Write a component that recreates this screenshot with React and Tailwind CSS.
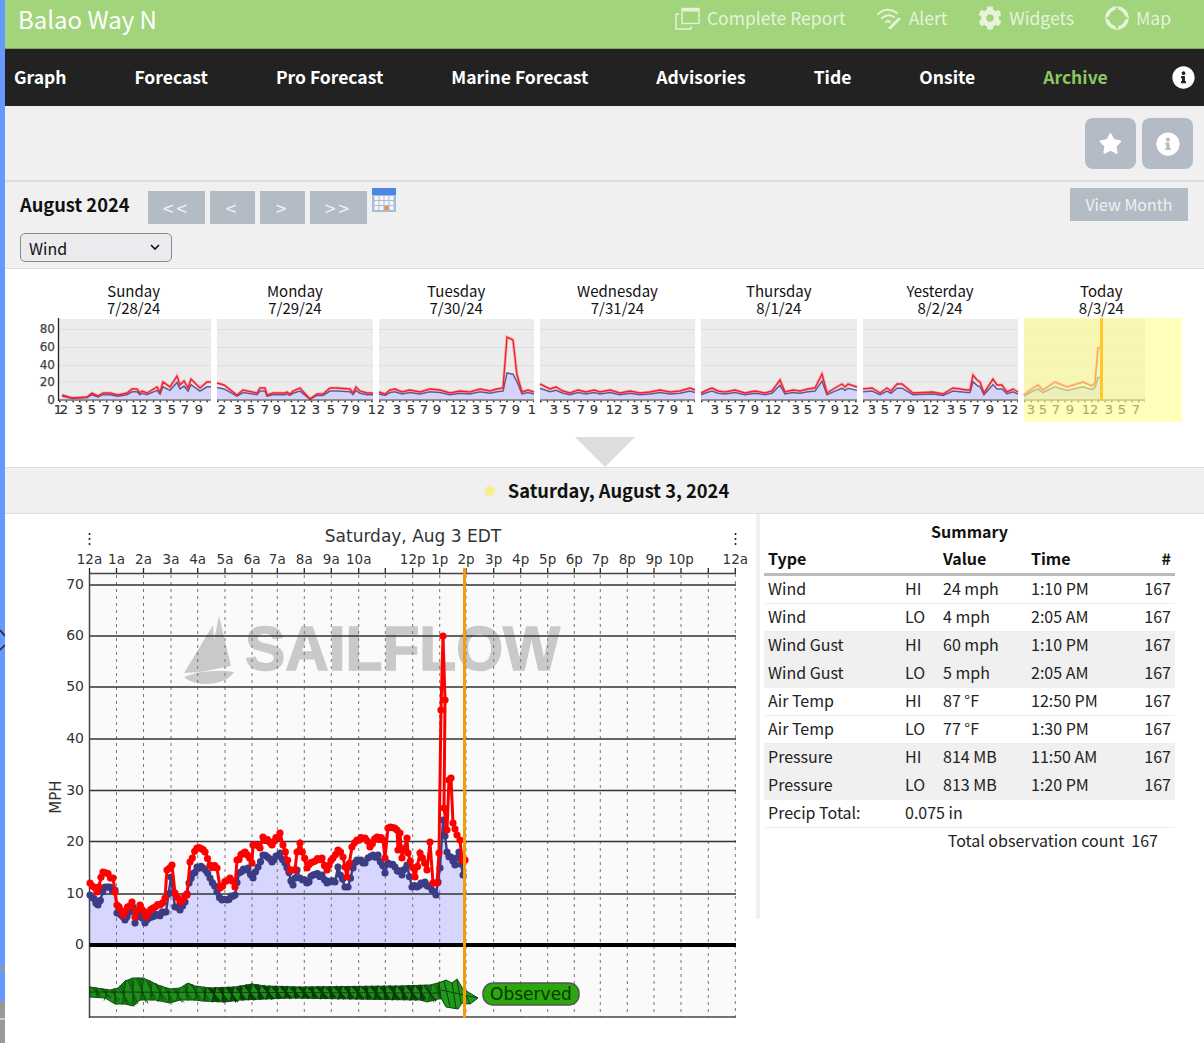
import { FaStar, FaInfoCircle, FaCog } from 'react-icons/fa'

const HOURS = ['12a','1a','2a','3a','4a','5a','6a','7a','8a','9a','10a','','12p','1p','2p','3p','4p','5p','6p','7p','8p','9p','10p','','12a']
const HOUR_X = [89.5,116.5,143.5,171,197.7,225,252,277.3,304.3,331.3,358.7,385.3,412.7,439.7,466,493.7,520.7,547.7,574.3,600.3,627.3,654,681,708.3,735.3]
const Y_TICKS = [[70,585],[60,636],[50,687],[40,739],[30,790.5],[20,841.5],[10,894]]

// traced off the graph, in page coordinates
const GUST = [[90,883],[97,892],[103,872],[113,878],[117,905],[123,915],[132,902],[135,917],[140,905],[146,917],[153,908],[160,905],[165,898],[167,870],[172,865],[175,893],[180,902],[187,895],[190,862],[197,848],[205,852],[210,865],[217,868],[220,888],[230,878],[235,887],[237,860],[245,852],[252,863],[253,845],[260,848],[263,837],[272,845],[280,833],[283,845],[290,870],[295,870],[297,852],[300,843],[307,868],[313,862],[322,858],[327,870],[333,858],[338,850],[343,857],[347,877],[352,847],[357,840],[365,838],[370,847],[377,837],[383,840],[385,858],[388,828],[397,830],[398,850],[400,833],[402,858],[407,838],[408,853],[415,877],[420,853],[427,870],[430,842],[433,883],[437,883],[439,853],[441,710],[443,636],[445,700],[444,808],[447,830],[449,780],[451,778],[453,823],[457,835],[460,840],[462,860],[465,860]]
const WIND = [[90,895],[98,905],[105,887],[115,890],[117,913],[125,920],[133,907],[135,923],[140,912],[145,923],[152,917],[158,915],[166,912],[171,877],[175,907],[180,910],[185,902],[189,883],[197,867],[203,868],[210,878],[217,892],[222,900],[227,900],[235,895],[239,873],[248,868],[253,878],[258,867],[263,855],[272,862],[280,853],[285,863],[293,885],[297,870],[300,878],[307,883],[313,875],[322,875],[327,883],[335,882],[338,867],[345,887],[348,887],[353,868],[357,860],[365,863],[368,858],[378,855],[385,873],[388,863],[395,867],[402,875],[407,865],[412,887],[417,887],[425,882],[432,890],[436,895],[440,868],[443,820],[447,852],[455,865],[459,852],[463,875]]

const RIBBON_TOP = [[90,987],[110,990],[118,988],[125,981],[133,978],[143,978],[150,981],[158,985],[170,989],[180,988],[188,983],[195,986],[210,988],[235,987],[252,984],[265,986],[300,987],[400,986],[430,985],[442,982]]
const RIBBON_BOT = [[90,997],[105,998],[115,1004],[125,1004],[133,1006],[140,1000],[155,1000],[170,1003],[180,1000],[195,1000],[202,1001],[225,1002],[240,1000],[290,998],[420,1000],[427,1002],[442,998]]

const MINI = [
  { x0: 59, x1: 211, gust: [[62,395],[72,398],[87,397],[92,393],[98,396],[103,393],[110,393],[118,395],[127,393],[132,389],[137,389],[140,393],[142,391],[147,393],[157,387],[160,392],[163,382],[170,387],[177,376],[180,385],[184,381],[188,388],[191,379],[200,388],[207,382],[211,382]],
    labels: [['1',58],['2',64],['3',79],['5',92],['7',106],['9',119],['12',139],['3',158],['5',172],['7',185],['9',199]] },
  { x0: 217, x1: 373, gust: [[217,383],[224,385],[237,395],[243,390],[257,393],[260,388],[265,388],[267,395],[273,393],[285,393],[287,392],[290,394],[293,391],[300,388],[310,399],[317,394],[323,394],[330,388],[337,388],[350,389],[353,393],[356,387],[360,391],[367,393],[373,393]],
    labels: [['2',222],['3',238],['5',251],['7',265],['9',277],['12',298],['3',316],['5',331],['7',345],['9',356],['1',372]] },
  { x0: 379, x1: 534, gust: [[379,392],[385,394],[390,390],[395,389],[402,392],[410,390],[420,392],[430,389],[440,390],[450,393],[460,391],[470,392],[480,389],[490,391],[497,389],[503,388],[507,337],[513,340],[517,375],[522,392],[528,390],[534,392]],
    labels: [['2',381],['3',397],['5',411],['7',424],['9',437],['12',458],['3',476],['5',489],['7',503],['9',516],['1',532]] },
  { x0: 540, x1: 695, gust: [[540,384],[550,389],[556,387],[563,391],[570,393],[578,390],[586,392],[594,390],[600,392],[610,390],[620,393],[630,391],[640,393],[650,392],[660,390],[670,392],[680,391],[690,388],[695,390]],
    labels: [['3',554],['5',567],['7',581],['9',594],['12',614],['3',635],['5',648],['7',661],['9',674],['1',690]] },
  { x0: 701, x1: 857, gust: [[701,393],[707,390],[712,388],[718,391],[725,392],[735,390],[745,393],[755,391],[765,393],[772,391],[780,380],[785,392],[793,390],[800,391],[808,389],[815,388],[822,374],[827,393],[835,388],[842,384],[845,387],[848,384],[857,387]],
    labels: [['3',715],['5',729],['7',742],['9',755],['12',773],['3',796],['5',808],['7',822],['9',835],['12',851]] },
  { x0: 863, x1: 1018, gust: [[863,389],[872,388],[880,393],[887,388],[891,391],[897,384],[902,384],[913,393],[933,392],[943,394],[953,388],[967,390],[970,390],[973,375],[977,380],[980,382],[984,393],[993,379],[997,385],[1002,385],[1007,392],[1013,389],[1018,392]],
    labels: [['3',872],['5',885],['7',898],['9',911],['12',931],['3',951],['5',963],['7',976],['9',990],['12',1010]] },
  { x0: 1024, x1: 1145, gust: [[1024,395],[1030,390],[1038,385],[1043,390],[1055,382],[1067,387],[1083,382],[1092,386],[1095,383],[1098,348],[1100,348]],
    labels: [['3',1031],['5',1043],['7',1056],['9',1070],['12',1090],['3',1109],['5',1122],['7',1136]] },
]

const ROWS = [
  ['Wind', 'HI', '24 mph', '1:10 PM', false],
  ['Wind', 'LO', '4 mph', '2:05 AM', false],
  ['Wind Gust', 'HI', '60 mph', '1:10 PM', true],
  ['Wind Gust', 'LO', '5 mph', '2:05 AM', true],
  ['Air Temp', 'HI', '87 °F', '12:50 PM', false],
  ['Air Temp', 'LO', '77 °F', '1:30 PM', false],
  ['Pressure', 'HI', '814 MB', '11:50 AM', true],
  ['Pressure', 'LO', '813 MB', '1:20 PM', true],
]

const pts = a => a.map(p => p.join(',')).join(' ')

// a marker every 5 minutes: about 2.25px along x, so the spike keeps just its own vertices
function resample(line, step) {
  const out = []
  for (let i = 0; i < line.length - 1; i++) {
    const [x0, y0] = line[i], [x1, y1] = line[i + 1]
    const n = Math.max(1, Math.round(Math.abs(x1 - x0) / step))
    for (let k = 0; k < n; k++) {
      const wobble = k === 0 ? 0 : (((i + 1) * (k + 3) * 13) % 5 - 2) * 0.7
      out.push([x0 + (x1 - x0) * k / n, y0 + (y1 - y0) * k / n + wobble])
    }
  }
  out.push(line[line.length - 1])
  return out
}

function lerp(line, x) {
  for (let i = 0; i < line.length - 1; i++) {
    if (x >= line[i][0] && x <= line[i + 1][0]) {
      const t = (x - line[i][0]) / (line[i + 1][0] - line[i][0])
      return line[i][1] + (line[i + 1][1] - line[i][1]) * t
    }
  }
  return line[line.length - 1][1]
}

function DirectionRibbon() {
  const strokes = []
  for (let x = 90, i = 0; x < 441; x += 2, i++) {
    const jit = ((i * 5) % 3) - 1
    const t = lerp(RIBBON_TOP, x) + jit * 0.7, b = lerp(RIBBON_BOT, x) - jit * 0.7
    const lean = ((i * 7) % 9) * 2 - 4
    const dark = x > 205 && x < 425
    strokes.push(<line key={i} x1={x} y1={t} x2={Math.max(90, Math.min(x + lean, 442))} y2={b} stroke={dark ? '#0a3a0a' : '#0f4f10'} strokeWidth={dark ? 1.5 : 0.9} />)
  }
  return (
    <g>
      <polygon points={pts([...RIBBON_TOP, ...[...RIBBON_BOT].reverse()])} fill="#1c8f18" stroke="#0f4f10" strokeWidth="1" />
      {strokes}
      <line x1="90" y1="992" x2="442" y2="993" stroke="#0a2f0a" strokeWidth="0.8" />
      <polygon points="439,983 446,980 452,983 457,979 463,989 478,998 470,1004 462,1003 458,1009 446,1007 441,998" fill="#1f9a1b" stroke="#0c3f0c" strokeWidth="1" />
      <path d="M444 981L450 1006M452 983L456 1008M457 980L461 1003M463 989L470 1004M441 990L478 998" stroke="#0c3f0c" strokeWidth="1" fill="none" />
    </g>
  )
}

function MainChart() {
  const gustDots = resample(GUST, 2.25)
  const windDots = resample(WIND, 2.25)
  const fill = [[90, 943], ...WIND, [464, 943]]
  return (
    <svg width="751" height="529" viewBox="5 514 751 529" className="block font-[DejaVu_Sans,sans-serif]">
      <rect x="89.5" y="574" width="646" height="443" fill="#fafafa" />
      <g fill="#c9c9c9">
        <path d="M184 673L213 625L214 640L219 616L231 666L200 672Z" />
        <path d="M184 677Q208 668 234 672Q226 684 205 684Q192 684 184 677Z" />
        <text x="245" y="670" fontFamily="Liberation Sans" fontWeight="700" fontSize="63" textLength="315" lengthAdjust="spacingAndGlyphs" stroke="#c9c9c9" strokeWidth="1.5">SAILFLOW</text>
      </g>
      <polygon points={pts(fill)} fill="#c8c8ff" fillOpacity="0.72" />
      {HOUR_X.map((x, i) => (
        <g key={i}>
          {i > 0 && i < 24 && <line x1={x} y1="575" x2={x} y2="1017" stroke="#777" strokeWidth="1" strokeDasharray="3 4" />}
          <line x1={x} y1="568" x2={x} y2="574" stroke="#222" strokeWidth="1.3" />
          {HOURS[i] && <text x={x} y="564" textAnchor="middle" fontSize="13.5" fill="#333">{HOURS[i]}</text>}
        </g>
      ))}
      <line x1="735.3" y1="574" x2="735.3" y2="1017" stroke="#777" strokeWidth="1" strokeDasharray="3 4" />
      <line x1="89.5" y1="573.5" x2="736" y2="573.5" stroke="#444" strokeWidth="1.3" />
      {Y_TICKS.map(([v, y]) => (
        <g key={v}>
          <line x1="89.5" y1={y} x2="736" y2={y} stroke="#333" strokeWidth="1.4" />
          <text x="84" y={y + 4} textAnchor="end" fontSize="14" fill="#333">{v}</text>
        </g>
      ))}
      <text x="84" y="949" textAnchor="end" fontSize="14" fill="#333">0</text>
      <line x1="89.5" y1="574" x2="89.5" y2="1018" stroke="#444" strokeWidth="1.5" />
      <line x1="89.5" y1="1017" x2="736" y2="1017" stroke="#444" strokeWidth="1.3" />

      <polyline points={pts(WIND)} fill="none" stroke="#3c3c84" strokeWidth="2.4" />
      {windDots.map(([x, y], i) => <circle key={i} cx={x} cy={y} r="3.6" fill="#3c3c84" />)}
      <polyline points={pts(GUST)} fill="none" stroke="#ff0000" strokeWidth="3" />
      {gustDots.map(([x, y], i) => <circle key={i} cx={x} cy={y} r="3.6" fill="#ff0000" />)}

      <line x1="89.5" y1="945" x2="736" y2="945" stroke="#000" strokeWidth="4" />
      <DirectionRibbon />
      <line x1="464.5" y1="568" x2="464.5" y2="1018" stroke="#f59b0c" strokeWidth="3" />

      <text x="413" y="542" textAnchor="middle" fontSize="17" fill="#333">Saturday, Aug 3 EDT</text>
      <path d="M89.5 533v2M89.5 538v2M89.5 543v2M735.5 533v2M735.5 538v2M735.5 543v2" stroke="#222" strokeWidth="1.6" />
      <text transform="translate(61 797) rotate(-90)" textAnchor="middle" fontSize="15" fill="#333">MPH</text>

      <rect x="483" y="983" width="96" height="22" rx="10" fill="#2ba70f" stroke="#555" strokeWidth="1.5" />
      <text x="531" y="999.5" textAnchor="middle" fontSize="17" fill="#0c3500">Observed</text>
    </svg>
  )
}

function MiniCharts() {
  return (
    <svg width="1199" height="104" viewBox="5 318 1199 104" className="block font-[DejaVu_Sans,sans-serif]">
      {[[80,333],[60,351],[40,369],[20,386],[0,403.5]].map(([v, y]) => (
        <text key={v} x="55" y={y} textAnchor="end" fontSize="12" fill="#444" stroke="#444" strokeWidth="0.25">{v}</text>
      ))}
      {MINI.map((m, i) => {
        const wind = m.gust.map(([x, y]) => [x, 399 - (399 - y) * (y < 360 ? 0.42 : 0.72)])
        return (
          <g key={i}>
            <rect x={m.x0} y="319" width={m.x1 - m.x0} height="80" fill="#ececec" />
            {[329.5, 347.5, 365.5, 382].map(y => <line key={y} x1={m.x0} y1={y} x2={m.x1} y2={y} stroke="#dedede" strokeWidth="1.2" />)}
            <polygon points={pts([[wind[0][0], 399], ...wind, [wind[wind.length - 1][0], 399]])} fill="#d4d4f8" />
            <polyline points={pts(wind)} fill="none" stroke="#5a5a9a" strokeWidth="1.5" />
            <polyline points={pts(m.gust)} fill="none" stroke="#ff3040" strokeOpacity="0.3" strokeWidth="3" />
            <polyline points={pts(m.gust)} fill="none" stroke="#f5202a" strokeWidth="1.4" />
            <line x1={m.x0} y1="400" x2={m.x1} y2="400" stroke="#222" strokeWidth="1.2" />
            <line x1={m.x0} y1="401.5" x2={m.x1} y2="401.5" stroke="#222" strokeWidth="1.5" strokeDasharray="1.5 5.2" />
            {m.labels.map(([t, x], k) => (
              <text key={k} x={x} y="414" textAnchor="middle" fontSize="13" fill="#333" stroke="#333" strokeWidth="0.2">{t}</text>
            ))}
          </g>
        )
      })}
      <line x1="58.5" y1="318" x2="58.5" y2="401" stroke="#222" strokeWidth="1.3" />
      <rect x="1024" y="318" width="158" height="104" fill="#ffff8e" fillOpacity="0.6" />
      <line x1="1101.5" y1="318" x2="1101.5" y2="401" stroke="#ffc62e" strokeWidth="3" />
    </svg>
  )
}

function ReportIcon() {
  return (
    <svg width="25" height="23" viewBox="0 0 25 23" fill="none" stroke="#e6f3da" strokeWidth="1.4">
      <rect x="7" y="1.5" width="17" height="15" />
      <path d="M7 3h17" strokeWidth="3" />
      <path d="M4 7H1v15h15v-3" />
    </svg>
  )
}

function AlertIcon() {
  return (
    <svg width="25" height="22" viewBox="0 0 25 22" fill="none" stroke="#e6f3da" strokeWidth="2" strokeLinecap="round">
      <path d="M1 7Q10-1 20 6" />
      <path d="M5 11Q11 6 17 10" />
      <path d="M9 15Q11 13 13 15" />
      <path d="M13 21L22 12" strokeWidth="3" />
    </svg>
  )
}

function MapIcon() {
  return (
    <svg width="24" height="24" viewBox="0 0 24 24" fill="none" stroke="#e6f3da" strokeWidth="3.5">
      <circle cx="12" cy="12" r="10" />
      <path d="M12 1.5v3M12 19.5v3M1.5 12h3M19.5 12h3" stroke="#a1d47b" strokeWidth="2.5" />
    </svg>
  )
}

function CalendarIcon() {
  const cells = []
  for (let r = 0; r < 3; r++) {
    for (let c = 0; c < 4; c++) {
      const hot = r === 2 && c === 2
      cells.push(<rect key={`${r}-${c}`} x={2.5 + c * 5} y={8 + r * 5} width="4" height="4" fill={hot ? '#f28a5e' : '#f4f6fa'} />)
    }
  }
  return (
    <svg width="24" height="24" viewBox="0 0 24 24">
      <rect width="24" height="24" fill="#a9bcd6" />
      <rect width="24" height="7" fill="#4a86e8" />
      {cells}
    </svg>
  )
}

function TopLink({ icon, children }) {
  return (
    <div className="flex items-center gap-[7px] text-[17.5px] leading-[26px] text-[#e6f3da]">
      {icon}
      <span>{children}</span>
    </div>
  )
}

const GrayBtn = ({ className, children }) => (
  <div className={`flex items-center justify-center bg-[#b3bbc4] text-[16px] text-[#eef1f4] ${className}`}>{children}</div>
)

const Arrow = ({ children }) => <span className="pt-[2px] text-[19px] tracking-[3px]">{children}</span>

export default function App() {
  return (
    <div className="relative flex h-[1043px] w-[1204px] overflow-hidden bg-white font-[Noto_Sans_CJK_JP,sans-serif] text-[#111]">
      <div className="relative h-full w-[5px] shrink-0 bg-[#6699ff]">
        <div className="absolute left-0 top-[967px] h-[4px] w-[5px] bg-[#999]" />
        <div className="absolute left-0 top-[1001px] h-[42px] w-[5px] bg-[#999]" />
        <div className="absolute left-0 top-[1018px] h-[2px] w-[5px] bg-[#ccc]" />
        <svg className="absolute left-0 top-[629px]" width="5" height="22" viewBox="0 0 5 22" fill="none" stroke="#222" strokeWidth="1.5">
          <path d="M0 1L5 7M5 16L0 21" />
        </svg>
      </div>

      <div className="flex w-[1199px] flex-col">
        <div className="flex h-[49px] shrink-0 items-start justify-between border-b border-[#7eab5e] bg-[#a1d47b] pl-[13px] pr-[33px]">
          <span className="text-[24px] leading-[37px] text-white">Balao Way N</span>
          <div className="flex items-center gap-[31px] pt-[5px]">
            <TopLink icon={<ReportIcon />}>Complete Report</TopLink>
            <TopLink icon={<AlertIcon />}>Alert</TopLink>
            <TopLink icon={<FaCog className="h-[24px] w-[24px]" />}>Widgets</TopLink>
            <TopLink icon={<MapIcon />}>Map</TopLink>
          </div>
        </div>

        <div className="relative flex h-[57px] shrink-0 items-center gap-[68px] bg-[#222222] pb-[1px] pl-[9px] text-[17.5px] font-bold text-white">
          <span>Graph</span>
          <span>Forecast</span>
          <span>Pro Forecast</span>
          <span>Marine Forecast</span>
          <span>Advisories</span>
          <span>Tide</span>
          <span>Onsite</span>
          <span className="text-[#8cc860]">Archive</span>
          <FaInfoCircle className="absolute left-[1167px] top-[17px] h-[23px] w-[23px] text-white" />
        </div>

        <div className="flex h-[76px] shrink-0 justify-end gap-[6px] border-b-2 border-[#dddddd] bg-[#f0f0f0] pr-[11px] pt-[12px]">
          <GrayBtn className="h-[51px] w-[51px] rounded-lg"><FaStar className="h-[23px] w-[23px] text-white" /></GrayBtn>
          <GrayBtn className="h-[51px] w-[51px] rounded-lg"><FaInfoCircle className="h-[24px] w-[24px] text-white" /></GrayBtn>
        </div>

        <div className="relative flex h-[87px] shrink-0 flex-col border-b border-[#dddddd] bg-[#f0f0f0]">
          <div className="flex items-start pl-[15px] pt-[6px]">
            <span className="w-[128px] text-[18.3px] font-bold leading-[33px]">August 2024</span>
            <div className="mt-[3px] flex gap-[5px]">
              <GrayBtn className="h-[33px] w-[57px]"><Arrow>&lt;&lt;</Arrow></GrayBtn>
              <GrayBtn className="h-[33px] w-[45px]"><Arrow>&lt;</Arrow></GrayBtn>
              <GrayBtn className="h-[33px] w-[45px]"><Arrow>&gt;</Arrow></GrayBtn>
              <GrayBtn className="h-[33px] w-[57px]"><Arrow>&gt;&gt;</Arrow></GrayBtn>
            </div>
            <div className="ml-[5px]"><CalendarIcon /></div>
            <GrayBtn className="ml-auto mr-[16px] h-[33px] w-[118px] pb-[1px]">View Month</GrayBtn>
          </div>
          <div className="relative ml-[15px] mt-[9px] h-[29px] w-[152px]">
            <select defaultValue="Wind" className="h-full w-full appearance-none rounded-[5px] border border-[#888] bg-[#eaeaef] pl-[8px] text-[16px] text-[#111]">
              <option>Wind</option>
            </select>
            <svg className="pointer-events-none absolute left-[130px] top-[11px]" width="10" height="7" viewBox="0 0 10 7" fill="none" stroke="#111" strokeWidth="1.6">
              <path d="M1 1l4 4 4-4" />
            </svg>
          </div>
        </div>

        <div className="relative h-[198px] shrink-0 bg-white">
          <div className="ml-[48px] grid w-[1129px] grid-cols-7 pt-[13px] text-center text-[15px] leading-[17px]">
            {[['Sunday','7/28/24'],['Monday','7/29/24'],['Tuesday','7/30/24'],['Wednesday','7/31/24'],['Thursday','8/1/24'],['Yesterday','8/2/24'],['Today','8/3/24']].map(([d, n]) => (
              <div key={d}><div>{d}</div><div>{n}</div></div>
            ))}
          </div>
          <div className="absolute left-0 top-[49px]"><MiniCharts /></div>
          <div className="absolute left-[570px] top-[168px] h-0 w-0 border-x-[30px] border-t-[30px] border-x-transparent border-t-[#dddddd]" />
        </div>

        <div className="flex h-[47px] shrink-0 items-center justify-center gap-[12px] border-y border-[#dddddd] bg-[#f0f0f0] pl-[4px] text-[18.3px] font-bold">
          <span className="h-[12px] w-[12px] rounded-full border border-[#eee] bg-[#f6f08c]" />
          <span>Saturday, August 3, 2024</span>
        </div>

        <div className="flex min-h-0 flex-1">
          <div className="w-[751px] shrink-0"><MainChart /></div>
          <div className="h-[405px] w-[4px] shrink-0 bg-[#f0f0f0]" />
          <div className="ml-[4px] w-[411px] pt-[8px] text-[16px] leading-[24px] text-[#222]">
            <div className="text-center text-[16px] font-bold leading-[19px] text-[#111]">Summary</div>
            <table className="mt-[3px] w-full table-fixed border-collapse [&_td]:pb-[3px]">
              <colgroup>
                <col className="w-[137px]" />
                <col className="w-[38px]" />
                <col className="w-[88px]" />
                <col className="w-[100px]" />
                <col />
              </colgroup>
              <thead>
                <tr className="h-[30px] border-b-[3px] border-[#bbbbbb] text-left text-[#111]">
                  <th className="pl-[4px] font-bold">Type</th>
                  <th />
                  <th className="pl-[4px] font-bold">Value</th>
                  <th className="pl-[4px] font-bold">Time</th>
                  <th className="pr-[4px] text-right font-bold">#</th>
                </tr>
              </thead>
              <tbody>
                {ROWS.map(([type, kind, val, time, shade], i) => (
                  <tr key={i} className={`h-[28px] border-b border-[#eeeeee] ${shade ? 'bg-[#f0f0f0]' : ''}`}>
                    <td className="pl-[4px]">{type}</td>
                    <td className="pl-[4px]">{kind}</td>
                    <td className="pl-[4px]">{val}</td>
                    <td className="pl-[4px]">{time}</td>
                    <td className="pr-[4px] text-right">{'167'}</td>
                  </tr>
                ))}
                <tr className="h-[28px] border-b border-[#eeeeee]">
                  <td className="pl-[4px]">Precip Total:</td>
                  <td colSpan="4" className="pl-[4px]">0.075 in</td>
                </tr>
                <tr className="h-[28px]">
                  <td colSpan="5" className="pr-[17px] text-right">Total observation count&nbsp;&nbsp;167</td>
                </tr>
              </tbody>
            </table>
          </div>
        </div>
      </div>
    </div>
  )
}
